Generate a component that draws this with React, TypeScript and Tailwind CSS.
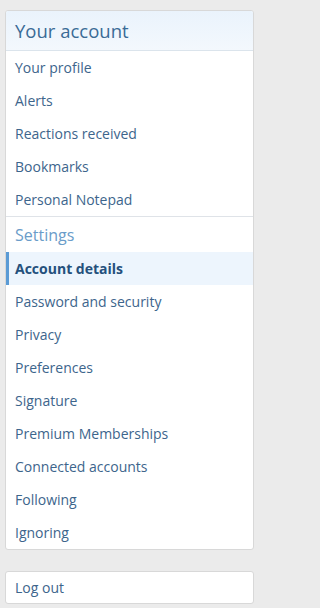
const accountLinks = ['Your profile', 'Alerts', 'Reactions received', 'Bookmarks', 'Personal Notepad'];

const settingsLinks = [
  'Account details',
  'Password and security',
  'Privacy',
  'Preferences',
  'Signature',
  'Premium Memberships',
  'Connected accounts',
  'Following',
  'Ignoring',
];

const font = { fontFamily: '"Segoe UI", "Open Sans", "Noto Sans", sans-serif' };

export default function App() {
  return (
    <div className="min-h-screen bg-[#ebebeb]" style={font}>
      <div className="min-h-[608px] w-[259px] px-[5px] pt-[10px]">
        <div className="overflow-hidden rounded-[3px] border border-[#d8d8d8] bg-white">
          <h3 className="h-[40px] border-b border-[#dbe4ec] bg-gradient-to-b from-[#eaf3fc] to-[#f3f8fd] pl-[9px] text-[18.5px] leading-[39px] text-[#3a6b96]">
            Your account
          </h3>
          <div>
            {accountLinks.map((label) => (
              <a
                key={label}
                className="block h-[33px] pl-[9px] text-[14px] leading-[33px] text-[#3d658c]"
              >
                {label}
              </a>
            ))}
          </div>
          <div className="border-t border-[#dfe3e8]">
            <h4 className="h-[35px] pl-[9px] pt-[2px] text-[16px] leading-[33px] text-[#6a9cc9]">Settings</h4>
            {settingsLinks.map((label, i) =>
              i === 0 ? (
                <a
                  key={label}
                  className="block h-[33px] border-l-[3px] border-[#5b9bd5] bg-[#edf5fd] pl-[6px] text-[14px] font-bold leading-[33px] text-[#24507c]"
                >
                  {label}
                </a>
              ) : (
                <a
                  key={label}
                  className="block h-[33px] pl-[9px] text-[14px] leading-[33px] text-[#3d658c]"
                >
                  {label}
                </a>
              )
            )}
          </div>
        </div>
        <div className="mt-[21px] rounded-[3px] border border-[#d8d8d8] bg-white">
          <a className="block h-[31px] pl-[9px] text-[14px] leading-[31px] text-[#3d658c]">Log out</a>
        </div>
      </div>
    </div>
  );
}
